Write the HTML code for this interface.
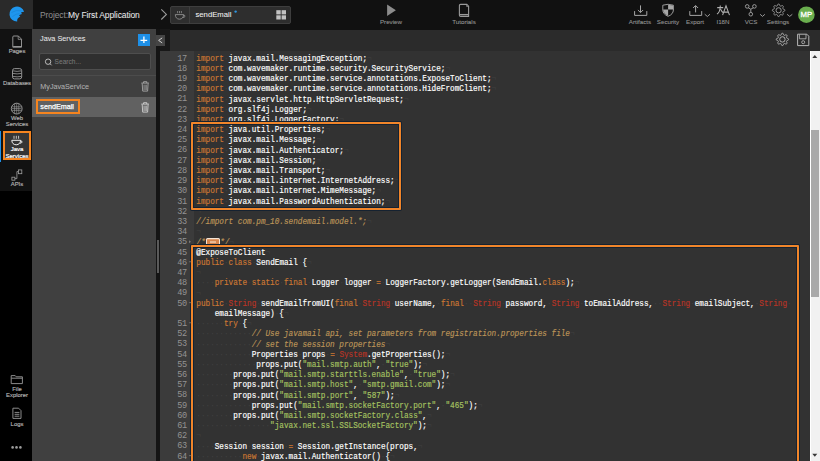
<!DOCTYPE html>
<html><head><meta charset="utf-8">
<style>
*{margin:0;padding:0;box-sizing:border-box}
html,body{width:820px;height:461px;overflow:hidden;background:#111;font-family:"Liberation Sans",sans-serif}
.rl{-webkit-text-stroke:0.15px currentColor}
.lbl{-webkit-text-stroke:0.08px currentColor}
#proj,#ptitle,#stext,#item1,#tabname{-webkit-text-stroke:0.05px currentColor}
#item2{-webkit-text-stroke:0.25px currentColor}
.a{position:absolute}
#top{left:0;top:0;width:820px;height:29.5px;background:#111}
#logo{left:0;top:0;width:33px;height:28.5px;background:#2a2a2a}
#proj{left:40px;top:9.8px;font-size:8.5px;color:#e8e8e8;white-space:nowrap;letter-spacing:-0.1px}
#proj span{color:#8c8c8c}
#tab{left:170px;top:6px;width:121px;height:18px;border:1px solid #3e3e3e;border-radius:2px;background:#2e2e2e}
#tabdiv{left:189px;top:7px;width:1px;height:16px;background:#3e3e3e}
#tabname{left:195.5px;top:9.8px;font-size:7.7px;color:#f2f2f2;white-space:nowrap}
.lbl{font-size:6.2px;color:#959595;white-space:nowrap;text-align:center}
#rail{left:0;top:29.5px;width:32px;height:161.5px;background:#121212}
#railb{left:0;top:191px;width:32px;height:270px;background:#000}
#railb2{left:32px;top:191px;width:1px;height:26px;background:#000}
.rl{font-size:5.9px;color:#b4b4b4;white-space:nowrap;text-align:center;width:34px;left:0;line-height:6.5px}
#panel{left:32px;top:29px;width:124px;height:432px;background:#404040}
#ptitle{left:40px;top:34.3px;font-size:7.3px;color:#e6e6e6;white-space:nowrap}
#plus{left:137.5px;top:34px;width:12.5px;height:12px;background:#1e90e8}
#search{left:39px;top:53px;width:112px;height:17px;border:1px solid #4e4e4e;border-radius:2px;background:#2f2f2f}
#stext{left:54.6px;top:58.2px;font-size:6.6px;color:#7a7a7a;white-space:nowrap}
#psep{left:32px;top:75px;width:124px;height:1px;background:#4c4c4c}
#item1{left:40.3px;top:81.6px;font-size:7.2px;color:#b0b0b0;white-space:nowrap}
#selrow{left:32px;top:97px;width:124px;height:20px;background:#616161}
#item2{left:40.3px;top:102px;font-size:7.2px;color:#fff;white-space:nowrap}
#obox{left:36.3px;top:98.9px;width:43.7px;height:15.6px;border:2px solid #f5841f}
#sepbar{left:156px;top:29px;width:4px;height:432px;background:#141414}
#handle{left:157px;top:239.6px;width:1.7px;height:33px;background:#5a5a5a}
#coll{left:155.7px;top:35px;width:9.2px;height:10.8px;background:#454545}
#edtl{left:160px;top:29px;width:10.3px;height:21.5px;background:#181818}
#edtb{left:170px;top:29.5px;width:650px;height:21px;background:#2b2b2b}
#gutter{left:160px;top:50.5px;width:34.3px;height:411px;background:#3b3b3b}
#codebg{left:194.3px;top:50.5px;width:615.7px;height:411px;background:#323232}
#gnums{left:160px;top:53.65px;width:26.6px;text-align:right;font-family:"Liberation Mono",monospace;font-size:8.6px;letter-spacing:-0.54px;line-height:10.19px;color:#939393}
#code{left:196.3px;top:53.84px;font-family:"Liberation Mono",monospace;font-size:7.7px;line-height:8.861px;color:#fff;white-space:pre}
#code>div{position:absolute;left:0;height:8.861px;transform:scaleY(1.15);transform-origin:0 0}
#gnums>div{position:absolute;right:0;height:10.19px}
#code b{font-weight:normal}
#code{-webkit-text-stroke:0.15px currentColor}
#code .k{color:#CC7833}
#code .r{color:#B83426}
#code .s{color:#A5C261}
#code .c{color:#BC9458;font-style:italic}
#code .i{color:#404040;-webkit-text-stroke:0}
.fold{display:inline-block;width:13.5px;height:7px;background:#d8844a;border:1px solid #f4e4d4;border-radius:1.5px;vertical-align:-1px;margin:0 0.5px;position:relative}
.fold:after{content:"";position:absolute;left:2.5px;right:2.5px;top:2.3px;height:1px;background:#f7e0c8}
#box1{left:191px;top:122px;width:210px;height:88px;border:2px solid #f0852a;border-radius:1px;box-shadow:0 0 0 1px #152231,inset 0 0 0 1px #152231}
#box2{left:191px;top:245px;width:608px;height:230px;border:2px solid #f0852a;border-radius:1px;box-shadow:0 0 0 1px #152231,inset 0 0 0 1px #152231}
#sb{left:809.5px;top:50.5px;width:10.5px;height:411px;background:#f1f1f1;border-left:1px solid #fff}
#thumb{left:811.2px;top:130.4px;width:7.8px;height:166.4px;background:#a9a9a9}
</style></head><body>
<div class="a" id="top"></div>
<div class="a" id="logo"></div>
<div class="a" id="proj"><span>Project:</span>My First Application</div>
<div class="a" id="tab"></div>
<div class="a" id="tabdiv"></div>
<div class="a" id="tabname">sendEmail</div>

<div class="a lbl" style="left:376px;top:17.7px;width:30px">Preview</div>
<div class="a lbl" style="left:448px;top:17.5px;width:32px">Tutorials</div>
<div class="a lbl" style="left:625px;top:17.5px;width:30px">Artifacts</div>
<div class="a lbl" style="left:653px;top:17.5px;width:30px">Security</div>
<div class="a lbl" style="left:680px;top:17.5px;width:30px">Export</div>
<div class="a lbl" style="left:708px;top:17.5px;width:30px">I18N</div>
<div class="a lbl" style="left:736px;top:17.5px;width:30px">VCS</div>
<div class="a lbl" style="left:763px;top:17.5px;width:30px">Settings</div>
<div class="a" style="left:797.4px;top:9.9px;width:18px;text-align:center;font-size:7.8px;color:#fff;-webkit-text-stroke:0.3px #fff;z-index:6">MP</div>

<div class="a" id="rail"></div>
<div class="a" id="railb"></div>
<div class="a" id="railb2"></div>
<div class="a rl" style="top:48px">Pages</div>
<div class="a rl" style="top:80px">Databases</div>
<div class="a rl" style="top:114.7px">Web<br>Services</div>
<div class="a" style="left:0;top:131px;width:1.3px;height:30.5px;background:#1e90e8"></div>
<div class="a" style="left:3.1px;top:131.2px;width:28.4px;height:29.2px;border:2px solid #f5841f;background:#353535"></div>
<div class="a rl" style="top:146px;color:#fff;font-size:6px;-webkit-text-stroke:0.2px #fff">Java<br>Services</div>
<div class="a rl" style="top:181px">APIs</div>
<div class="a rl" style="top:385.5px">File<br>Explorer</div>
<div class="a rl" style="top:421px">Logs</div>

<div class="a" id="panel"></div>
<div class="a" id="ptitle">Java Services</div>
<div class="a" id="plus"></div>
<div class="a" id="search"></div>
<div class="a" id="stext">Search...</div>
<div class="a" id="psep"></div>
<div class="a" id="item1">MyJavaService</div>
<div class="a" id="selrow"></div>
<div class="a" id="item2">sendEmail</div>
<div class="a" id="obox"></div>

<div class="a" id="sepbar"></div>
<div class="a" id="handle"></div>
<div class="a" id="edtl"></div>
<div class="a" id="coll"></div>
<div class="a" id="edtb"></div>
<div class="a" id="gutter"></div>
<div class="a" id="codebg"></div>
<div class="a" id="gnums"><div style="top:0.00px">17</div><div style="top:10.21px">18</div><div style="top:20.41px">19</div><div style="top:30.62px">20</div><div style="top:40.82px">21</div><div style="top:51.02px">22</div><div style="top:61.23px">23</div><div style="top:71.44px">24</div><div style="top:81.64px">25</div><div style="top:91.84px">26</div><div style="top:102.05px">27</div><div style="top:112.25px">28</div><div style="top:122.46px">29</div><div style="top:132.66px">30</div><div style="top:142.87px">31</div><div style="top:153.07px">32</div><div style="top:163.28px">33</div><div style="top:173.49px">34</div><div style="top:183.69px">35</div><div style="top:193.90px">45</div><div style="top:204.10px">46</div><div style="top:214.31px">47</div><div style="top:224.51px">48</div><div style="top:234.72px">49</div><div style="top:244.92px">50</div><div style="top:255.12px">&nbsp;</div><div style="top:265.33px">51</div><div style="top:275.54px">52</div><div style="top:285.74px">53</div><div style="top:295.94px">54</div><div style="top:306.15px">55</div><div style="top:316.36px">56</div><div style="top:326.56px">57</div><div style="top:336.76px">58</div><div style="top:346.97px">59</div><div style="top:357.18px">60</div><div style="top:367.38px">61</div><div style="top:377.58px">62</div><div style="top:387.79px">63</div><div style="top:398.00px">64</div></div>
<div class="a" id="code"><div style="top:0.00px"><b class="k">import</b><b class="i">·</b>javax.mail.MessagingException;<b class="i">¬</b></div><div style="top:10.21px"><b class="k">import</b><b class="i">·</b>com.wavemaker.runtime.security.SecurityService;<b class="i">¬</b></div><div style="top:20.41px"><b class="k">import</b><b class="i">·</b>com.wavemaker.runtime.service.annotations.ExposeToClient;<b class="i">¬</b></div><div style="top:30.62px"><b class="k">import</b><b class="i">·</b>com.wavemaker.runtime.service.annotations.HideFromClient;<b class="i">¬</b></div><div style="top:40.82px"><b class="k">import</b><b class="i">·</b>javax.servlet.http.HttpServletRequest;<b class="i">¬</b></div><div style="top:51.02px"><b class="k">import</b><b class="i">·</b>org.slf4j.Logger;<b class="i">¬</b></div><div style="top:61.23px"><b class="k">import</b><b class="i">·</b>org.slf4j.LoggerFactory;<b class="i">¬</b></div><div style="top:71.44px"><b class="k">import</b><b class="i">·</b>java.util.Properties;<b class="i">¬</b></div><div style="top:81.64px"><b class="k">import</b><b class="i">·</b>javax.mail.Message;<b class="i">¬</b></div><div style="top:91.84px"><b class="k">import</b><b class="i">·</b>javax.mail.Authenticator;<b class="i">¬</b></div><div style="top:102.05px"><b class="k">import</b><b class="i">·</b>javax.mail.Session;<b class="i">¬</b></div><div style="top:112.25px"><b class="k">import</b><b class="i">·</b>javax.mail.Transport;<b class="i">¬</b></div><div style="top:122.46px"><b class="k">import</b><b class="i">·</b>javax.mail.internet.InternetAddress;<b class="i">¬</b></div><div style="top:132.66px"><b class="k">import</b><b class="i">·</b>javax.mail.internet.MimeMessage;<b class="i">¬</b></div><div style="top:142.87px"><b class="k">import</b><b class="i">·</b>javax.mail.PasswordAuthentication;<b class="i">¬</b></div><div style="top:153.07px"><b class="i">¬</b></div><div style="top:163.28px"><b class="c">//import com.pm_10.sendemail.model.*;</b><b class="i">¬</b></div><div style="top:173.49px"><b class="i">¬</b></div><div style="top:183.69px"><b class="c">/*</b><span class="fold"></span><b class="c">*/</b><b class="i">¬</b></div><div style="top:193.90px">@ExposeToClient<b class="i">¬</b></div><div style="top:204.10px"><b class="k">public</b><b class="i">·</b><b class="k">class</b><b class="i">·</b>SendEmail<b class="i">·</b>{<b class="i">¬</b></div><div style="top:214.31px"><b class="i">¬</b></div><div style="top:224.51px"><b class="i">····</b><b class="k">private</b><b class="i">·</b><b class="k">static</b><b class="i">·</b><b class="k">final</b><b class="i">·</b>Logger<b class="i">·</b>logger<b class="i">·</b><b class="k">=</b><b class="i">·</b>LoggerFactory.getLogger(SendEmail.<b class="k">class</b>);<b class="i">¬</b></div><div style="top:234.72px"><b class="i">¬</b></div><div style="top:244.92px"><b class="k">public</b><b class="i">·</b><b class="r">String</b><b class="i">·</b>sendEmailfromUI(<b class="k">final</b><b class="i">·</b><b class="r">String</b><b class="i">·</b>userName,<b class="i">·</b><b class="k">final</b><b class="i">··</b><b class="r">String</b><b class="i">·</b>password,<b class="i">·</b><b class="r">String</b><b class="i">·</b>toEmailAddress,<b class="i">··</b><b class="r">String</b><b class="i">·</b>emailSubject,<b class="i">·</b><b class="r">String</b><b class="i">·</b></div><div style="top:255.12px">&nbsp;&nbsp;&nbsp;&nbsp;emailMessage)<b class="i">·</b>{<b class="i">¬</b></div><div style="top:265.33px"><b class="i">······</b><b class="k">try</b><b class="i">·</b>{<b class="i">¬</b></div><div style="top:275.54px"><b class="i">············</b><b class="c">// Use javamail api, set parameters from registration.properties file</b><b class="i">¬</b></div><div style="top:285.74px"><b class="i">············</b><b class="c">// set the session properties</b><b class="i">¬</b></div><div style="top:295.94px"><b class="i">············</b>Properties<b class="i">·</b>props<b class="i">·</b><b class="k">=</b><b class="i">·</b><b class="r">System</b>.getProperties();<b class="i">¬</b></div><div style="top:306.15px"><b class="i">·············</b>props.put(<b class="s">&quot;mail.smtp.auth&quot;</b>,<b class="i">·</b><b class="s">&quot;true&quot;</b>);<b class="i">¬</b></div><div style="top:316.36px"><b class="i">········</b>props.put(<b class="s">&quot;mail.smtp.starttls.enable&quot;</b>,<b class="i">·</b><b class="s">&quot;true&quot;</b>);<b class="i">¬</b></div><div style="top:326.56px"><b class="i">········</b>props.put(<b class="s">&quot;mail.smtp.host&quot;</b>,<b class="i">·</b><b class="s">&quot;smtp.gmail.com&quot;</b>);<b class="i">¬</b></div><div style="top:336.76px"><b class="i">········</b>props.put(<b class="s">&quot;mail.smtp.port&quot;</b>,<b class="i">·</b><b class="s">&quot;587&quot;</b>);<b class="i">¬</b></div><div style="top:346.97px"><b class="i">············</b>props.put(<b class="s">&quot;mail.smtp.socketFactory.port&quot;</b>,<b class="i">·</b><b class="s">&quot;465&quot;</b>);<b class="i">¬</b></div><div style="top:357.18px"><b class="i">········</b>props.put(<b class="s">&quot;mail.smtp.socketFactory.class&quot;</b>,<b class="i">¬</b></div><div style="top:367.38px"><b class="i">················</b><b class="s">&quot;javax.net.ssl.SSLSocketFactory&quot;</b>);<b class="i">¬</b></div><div style="top:377.58px"><b class="i">¬</b></div><div style="top:387.79px"><b class="i">····</b>Session<b class="i">·</b>session<b class="i">·</b><b class="k">=</b><b class="i">·</b>Session.getInstance(props,<b class="i">¬</b></div><div style="top:398.00px"><b class="i">··········</b><b class="k">new</b><b class="i">·</b>javax.mail.Authenticator()<b class="i">·</b>{<b class="i">¬</b></div></div>
<div class="a" id="box1"></div>
<div class="a" id="box2"></div>
<div class="a" id="sb"></div>
<div class="a" id="thumb"></div>
<svg class="a" style="left:0;top:0;z-index:5" width="820" height="461" viewBox="0 0 820 461" fill="none">
<path d="M24.1 11.8 A7.5 7.5 0 1 0 17.2 21.6 Q17 19.6 17.6 18.7 Q18.6 17.1 20.3 16.4 Q19.6 15.9 19.1 15.2 Q20.5 14.3 22 14 Q21.4 13.3 21 12.6 Q22.5 11.9 24.1 11.8 Z" fill="#1e96ee"/>
<path d="M11.5 12.5 Q16 9.5 21.5 10.8 M12.5 16.5 Q16 13.5 19.6 13.6" stroke="#1a82d0" stroke-width="0.6"/>
<path d="M161.3 9.3 L166.4 14.4 L161.3 19.5" stroke="#9c9c9c" stroke-width="1.1"/>
<path d="M177.6 11 V13.2 M179.5 11 V13.2 M181.4 11 V13.2" stroke="#8d8d8d" stroke-width="0.8"/>
<path d="M175.3 14.6 H183.6 Q183.4 19 179.4 19.2 Q175.5 19 175.3 14.6 Z M183.4 15 Q185.4 15.2 184.9 16.6 Q184.4 17.6 182.6 17.4" stroke="#8d8d8d" stroke-width="0.9"/>
<rect x="276.3" y="10.2" width="4.4" height="4.2" fill="#c2c2c2"/>
<rect x="281.6" y="10.2" width="4.4" height="4.2" fill="#c2c2c2"/>
<rect x="276.3" y="15.3" width="4.4" height="4.2" fill="#c2c2c2"/>
<rect x="281.6" y="15.3" width="4.4" height="4.2" fill="#c2c2c2"/>
<circle cx="235.6" cy="11.6" r="1.2" fill="#2f95e0"/>
<path d="M387.1 4.6 L395.9 10.35 L387.1 16.1 Z" fill="#8c8c8c"/>
<path d="M459.4 15.2 V5.5 Q459.4 4.4 460.5 4.4 H466.8 L468.6 6.2 V16.4 H460.6 Q459.4 16.4 459.4 15.2 Z" stroke="#9a9a9a" stroke-width="1.1"/>
<path d="M459.6 14.6 H468.4" stroke="#9a9a9a" stroke-width="1.3"/>
<path d="M466.6 4.6 L466.6 6.5 L468.4 6.5" stroke="#9a9a9a" stroke-width="0.7"/>
<path d="M640.5 5.4 V12.4 M637.9 10 L640.5 12.6 L643.1 10 M634.6 11.1 V15.4 H646.8 V11.1" stroke="#a5a5a5" stroke-width="1"/>
<path d="M662.8 5.2 L668.1 4.3 L673.4 5.2 V10 Q673.2 14.3 668.1 16.3 Q663 14.3 662.8 10 Z" stroke="#a8a8a8" stroke-width="0.9"/>
<path d="M668.1 4.8 V9.6 H673 V5.6 Z" fill="#a8a8a8"/>
<path d="M663.2 9.6 H668.1 V15.8 Q663.6 13.8 663.2 10 Z" fill="#a8a8a8"/>
<path d="M695.6 5.8 V12.4 M693.1 8 L695.6 5.5 L698.1 8 M689.8 11.1 V15.4 H701.7 V11.1" stroke="#a5a5a5" stroke-width="1"/>
<path d="M704.7 14.2 L707.4 16.5 L710 14.2" stroke="#a5a5a5" stroke-width="0.9"/>
<path d="M717.2 7.6 H723.2 M720.3 5.4 Q720.4 11.5 717 14.2 M720.6 9.2 Q721.8 11.8 723.4 12.8" stroke="#b0b0b0" stroke-width="1.05"/>
<path d="M722.6 15.1 L726 5.8 L729.5 15.1 M723.9 12.1 H728.2" stroke="#b0b0b0" stroke-width="1.05"/>
<circle cx="747.2" cy="6.4" r="1.8" stroke="#a5a5a5" stroke-width="0.9"/>
<circle cx="754.4" cy="6.4" r="1.8" stroke="#a5a5a5" stroke-width="0.9"/>
<circle cx="750.8" cy="14.2" r="1.8" stroke="#a5a5a5" stroke-width="0.9"/>
<path d="M748.3 7.8 L750.8 9.2 L753.3 7.8 M750.8 9.2 V12.4" stroke="#a5a5a5" stroke-width="0.9"/>
<path d="M760.1 14.3 L762.5 16.4 L764.9 14.3" stroke="#a5a5a5" stroke-width="0.9"/>
<path d="M784.80 10.30 L784.78 10.54 L784.73 10.78 L784.60 11.01 L784.33 11.21 L783.90 11.35 L783.46 11.47 L783.18 11.59 L783.03 11.74 L782.93 11.90 L782.85 12.06 L782.79 12.23 L782.75 12.41 L782.75 12.63 L782.87 12.91 L783.09 13.30 L783.29 13.71 L783.34 14.04 L783.27 14.29 L783.14 14.50 L782.98 14.68 L782.80 14.84 L782.59 14.97 L782.34 15.04 L782.01 14.99 L781.60 14.79 L781.21 14.57 L780.93 14.45 L780.71 14.45 L780.53 14.49 L780.36 14.55 L780.20 14.63 L780.04 14.73 L779.89 14.88 L779.77 15.16 L779.65 15.60 L779.51 16.03 L779.31 16.30 L779.08 16.43 L778.84 16.48 L778.60 16.50 L778.36 16.48 L778.12 16.43 L777.89 16.30 L777.69 16.03 L777.55 15.60 L777.43 15.16 L777.31 14.88 L777.16 14.73 L777.00 14.63 L776.84 14.55 L776.67 14.49 L776.49 14.45 L776.27 14.45 L775.99 14.57 L775.60 14.79 L775.19 14.99 L774.86 15.04 L774.61 14.97 L774.40 14.84 L774.22 14.68 L774.06 14.50 L773.93 14.29 L773.86 14.04 L773.91 13.71 L774.11 13.30 L774.33 12.91 L774.45 12.63 L774.45 12.41 L774.41 12.23 L774.35 12.06 L774.27 11.90 L774.17 11.74 L774.02 11.59 L773.74 11.47 L773.30 11.35 L772.87 11.21 L772.60 11.01 L772.47 10.78 L772.42 10.54 L772.40 10.30 L772.42 10.06 L772.47 9.82 L772.60 9.59 L772.87 9.39 L773.30 9.25 L773.74 9.13 L774.02 9.01 L774.17 8.86 L774.27 8.70 L774.35 8.54 L774.41 8.37 L774.45 8.19 L774.45 7.97 L774.33 7.69 L774.11 7.30 L773.91 6.89 L773.86 6.56 L773.93 6.31 L774.06 6.10 L774.22 5.92 L774.40 5.76 L774.61 5.63 L774.86 5.56 L775.19 5.61 L775.60 5.81 L775.99 6.03 L776.27 6.15 L776.49 6.15 L776.67 6.11 L776.84 6.05 L777.00 5.97 L777.16 5.87 L777.31 5.72 L777.43 5.44 L777.55 5.00 L777.69 4.57 L777.89 4.30 L778.12 4.17 L778.36 4.12 L778.60 4.10 L778.84 4.12 L779.08 4.17 L779.31 4.30 L779.51 4.57 L779.65 5.00 L779.77 5.44 L779.89 5.72 L780.04 5.87 L780.20 5.97 L780.36 6.05 L780.53 6.11 L780.71 6.15 L780.93 6.15 L781.21 6.03 L781.60 5.81 L782.01 5.61 L782.34 5.56 L782.59 5.63 L782.80 5.76 L782.98 5.92 L783.14 6.10 L783.27 6.31 L783.34 6.56 L783.29 6.89 L783.09 7.30 L782.87 7.69 L782.75 7.97 L782.75 8.19 L782.79 8.37 L782.85 8.54 L782.93 8.70 L783.03 8.86 L783.18 9.01 L783.46 9.13 L783.90 9.25 L784.33 9.39 L784.60 9.59 L784.73 9.82 L784.78 10.06 Z" stroke="#a5a5a5" stroke-width="0.9"/>
<circle cx="778.6" cy="10.3" r="2.6" stroke="#a5a5a5" stroke-width="0.9"/>
<path d="M787.1 14.3 L789.7 16.4 L792.3 14.3" stroke="#a5a5a5" stroke-width="0.9"/>
<circle cx="806.4" cy="14.7" r="8.3" fill="#6aae4e"/>
<path d="M12.8 47.2 V37 Q12.8 36 13.8 36 H18.4 L21.5 39.2 V47.2 Z" stroke="#a0a0a0" stroke-width="0.9"/>
<path d="M18.2 36.2 V39.4 H21.4" stroke="#a0a0a0" stroke-width="0.7"/>
<path d="M13.2 46.6 H21.2" stroke="#a0a0a0" stroke-width="1"/>
<rect x="12.5" y="68.6" width="9.2" height="10.3" rx="2" stroke="#a0a0a0" stroke-width="0.9"/>
<path d="M12.8 70.8 Q17.1 72 21.4 70.8 M12.8 73.4 Q17.1 74.4 21.4 73.4 M12.8 76.4 Q17.1 77.3 21.4 76.4" stroke="#a0a0a0" stroke-width="0.8"/>
<circle cx="16.7" cy="108.6" r="5.4" stroke="#a0a0a0" stroke-width="0.9"/>
<path d="M11.6 106.8 H21.8 M11.6 110.4 H21.8 M11.9 108.6 H21.5 M14.6 103.6 V113.6 M16.7 103.3 V113.9 M18.8 103.6 V113.6" stroke="#a0a0a0" stroke-width="0.6"/>
<path d="M14 135.8 V138.8 M16.3 135.8 V138.8 M18.6 135.8 V138.8" stroke="#e8e8e8" stroke-width="0.8"/>
<path d="M11.8 140.3 H20.6 Q20.3 144.6 16.2 144.8 Q12 144.6 11.8 140.3 Z M20.4 140.8 Q22.3 140.8 22 142.2 Q21.6 143.3 19.8 143.2" stroke="#f0f0f0" stroke-width="1"/>
<rect x="18.4" y="169.9" width="3.4" height="3.8" stroke="#a0a0a0" stroke-width="0.8"/>
<rect x="11.9" y="177.2" width="3" height="3" stroke="#a0a0a0" stroke-width="0.8"/>
<path d="M14.9 178.6 H16.9 V171.6 H18.4" stroke="#a0a0a0" stroke-width="0.8"/>
<path d="M11.2 383.6 V375.6 H15.2 L16.2 376.8 H22.4 V383.6 Z M11.4 378.2 H22.2" stroke="#9a9a9a" stroke-width="0.9"/>
<path d="M12.9 418.4 V408.2 H18.6 L21 410.6 V418.4 Z" stroke="#9a9a9a" stroke-width="0.9"/>
<path d="M14.6 412.4 H19.4 M14.6 414.3 H19.4 M14.6 416.2 H19.4" stroke="#9a9a9a" stroke-width="0.9"/>
<circle cx="12.6" cy="447.4" r="1.3" fill="#9c9c9c"/>
<circle cx="16.5" cy="447.4" r="1.3" fill="#9c9c9c"/>
<circle cx="20.4" cy="447.4" r="1.3" fill="#9c9c9c"/>
<path d="M140.5 40.4 H147.2 M143.9 36.6 V42.9" stroke="#fff" stroke-width="1.3"/>
<path d="M162.2 37.9 L158.6 40.4 L162.2 42.9" stroke="#d0d0d0" stroke-width="1"/>
<circle cx="48.1" cy="61.7" r="2.7" stroke="#c8c8c8" stroke-width="0.9"/>
<path d="M50 63.7 L51.6 65.3" stroke="#c8c8c8" stroke-width="0.9"/>
<path d="M141.3 83.1 H149 M143.6 83.1 V81.7 H146.8 V83.1 M142.2 83.5 L142.7 91.1 H147.6 L148.1 83.5" stroke="#b4b4b4" stroke-width="0.8"/>
<path d="M144 84.7 V90.1 M145.2 84.7 V90.1 M146.4 84.7 V90.1" stroke="#b4b4b4" stroke-width="0.6"/>
<path d="M141.3 104.1 H149 M143.6 104.1 V102.7 H146.8 V104.1 M142.2 104.5 L142.7 112.1 H147.6 L148.1 104.5" stroke="#dedede" stroke-width="0.8"/>
<path d="M144 105.7 V111.1 M145.2 105.7 V111.1 M146.4 105.7 V111.1" stroke="#dedede" stroke-width="0.6"/>
<path d="M788.50 39.40 L788.48 39.64 L788.43 39.87 L788.30 40.10 L788.03 40.29 L787.60 40.43 L787.17 40.54 L786.89 40.67 L786.73 40.81 L786.63 40.96 L786.56 41.12 L786.50 41.29 L786.46 41.47 L786.47 41.68 L786.58 41.96 L786.81 42.34 L787.01 42.75 L787.06 43.08 L787.00 43.33 L786.87 43.53 L786.71 43.71 L786.53 43.87 L786.33 44.00 L786.08 44.06 L785.75 44.01 L785.34 43.81 L784.96 43.58 L784.68 43.47 L784.47 43.46 L784.29 43.50 L784.12 43.56 L783.96 43.63 L783.81 43.73 L783.67 43.89 L783.54 44.17 L783.43 44.60 L783.29 45.03 L783.10 45.30 L782.87 45.43 L782.64 45.48 L782.40 45.50 L782.16 45.48 L781.93 45.43 L781.70 45.30 L781.51 45.03 L781.37 44.60 L781.26 44.17 L781.13 43.89 L780.99 43.73 L780.84 43.63 L780.68 43.56 L780.51 43.50 L780.33 43.46 L780.12 43.47 L779.84 43.58 L779.46 43.81 L779.05 44.01 L778.72 44.06 L778.47 44.00 L778.27 43.87 L778.09 43.71 L777.93 43.53 L777.80 43.33 L777.74 43.08 L777.79 42.75 L777.99 42.34 L778.22 41.96 L778.33 41.68 L778.34 41.47 L778.30 41.29 L778.24 41.12 L778.17 40.96 L778.07 40.81 L777.91 40.67 L777.63 40.54 L777.20 40.43 L776.77 40.29 L776.50 40.10 L776.37 39.87 L776.32 39.64 L776.30 39.40 L776.32 39.16 L776.37 38.93 L776.50 38.70 L776.77 38.51 L777.20 38.37 L777.63 38.26 L777.91 38.13 L778.07 37.99 L778.17 37.84 L778.24 37.68 L778.30 37.51 L778.34 37.33 L778.33 37.12 L778.22 36.84 L777.99 36.46 L777.79 36.05 L777.74 35.72 L777.80 35.47 L777.93 35.27 L778.09 35.09 L778.27 34.93 L778.47 34.80 L778.72 34.74 L779.05 34.79 L779.46 34.99 L779.84 35.22 L780.12 35.33 L780.33 35.34 L780.51 35.30 L780.68 35.24 L780.84 35.17 L780.99 35.07 L781.13 34.91 L781.26 34.63 L781.37 34.20 L781.51 33.77 L781.70 33.50 L781.93 33.37 L782.16 33.32 L782.40 33.30 L782.64 33.32 L782.87 33.37 L783.10 33.50 L783.29 33.77 L783.43 34.20 L783.54 34.63 L783.67 34.91 L783.81 35.07 L783.96 35.17 L784.12 35.24 L784.29 35.30 L784.47 35.34 L784.68 35.33 L784.96 35.22 L785.34 34.99 L785.75 34.79 L786.08 34.74 L786.33 34.80 L786.53 34.93 L786.71 35.09 L786.87 35.27 L787.00 35.47 L787.06 35.72 L787.01 36.05 L786.81 36.46 L786.58 36.84 L786.47 37.12 L786.46 37.33 L786.50 37.51 L786.56 37.68 L786.63 37.84 L786.73 37.99 L786.89 38.13 L787.17 38.26 L787.60 38.37 L788.03 38.51 L788.30 38.70 L788.43 38.93 L788.48 39.16 Z" stroke="#bdbdbd" stroke-width="0.9"/>
<circle cx="782.4" cy="39.4" r="2.7" stroke="#bdbdbd" stroke-width="0.9"/>
<path d="M797.6 34.2 H806.8 L808.8 36.2 V45.6 H797.6 Z" stroke="#bdbdbd" stroke-width="0.95"/>
<path d="M799.4 34.4 V38.8 H806 V34.4" stroke="#bdbdbd" stroke-width="0.8"/>
<circle cx="803.2" cy="42.2" r="1.5" stroke="#bdbdbd" stroke-width="0.8"/>
<path d="M812.3 58.1 L814.8 55.1 L817.3 58.1 Z" fill="#383838"/>
<path d="M812.3 453.7 L817.3 453.7 L814.8 456.7 Z" fill="#383838"/>
<path d="M189 240.2 L191 241.7 L189 243.2 Z" fill="#7a7a7a"/>
<path d="M188.7 261.30 L191.3 261.30 L190 262.80 Z" fill="#6e6e6e"/>
<path d="M188.7 301.90 L191.3 301.90 L190 303.40 Z" fill="#6e6e6e"/>
<path d="M188.7 322.30 L191.3 322.30 L190 323.80 Z" fill="#6e6e6e"/>
<path d="M188.7 455.10 L191.3 455.10 L190 456.60 Z" fill="#6e6e6e"/>
</svg>
</body></html>
